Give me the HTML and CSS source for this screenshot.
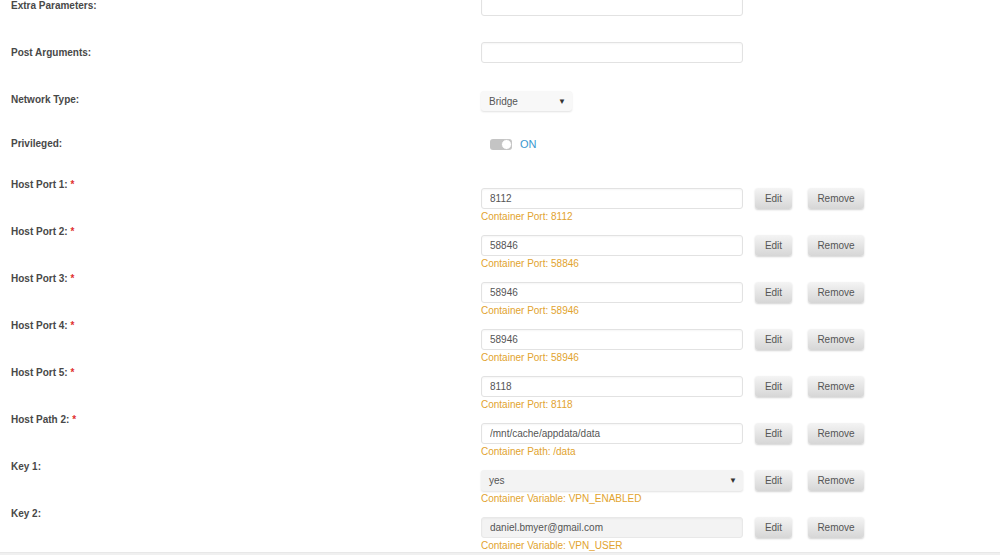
FILE: index.html
```html
<!DOCTYPE html>
<html lang="en">

<head>
    <meta charset="UTF-8">
    <meta name="viewport" content="width=device-width, initial-scale=1.0">
    <title>Update Container</title>
    <link rel="stylesheet" href="styles.css">
</head>

<body>
    <div class="form">
        <div class="row top">
            <div class="label">Extra Parameters:</div>
            <div class="value"><input type="text" class="text"></div>
        </div>
        <div class="row top">
            <div class="label">Post Arguments:</div>
            <div class="value"><input type="text" class="text"></div>
        </div>
        <div class="row top net">
            <div class="label">Network Type:</div>
            <div class="value">
                <div class="select small">Bridge<span class="arrow">&#9660;</span></div>
            </div>
        </div>
        <div class="row top priv">
            <div class="label">Privileged:</div>
            <div class="value switch-line">
                <span class="switch"><span class="knob"></span></span>
                <span class="on">ON</span>
            </div>
        </div>

        <!-- ports, paths, variables -->
        <div class="row item">
            <div class="label">Host Port 1: <span class="req">*</span></div>
            <div class="value">
                <div class="line">
                    <input type="text" class="text" value="8112">
                    <button class="btn edit">Edit</button>
                    <button class="btn remove">Remove</button>
                </div>
                <div class="desc">Container Port: 8112</div>
            </div>
        </div>
        <div class="row item">
            <div class="label">Host Port 2: <span class="req">*</span></div>
            <div class="value">
                <div class="line">
                    <input type="text" class="text" value="58846">
                    <button class="btn edit">Edit</button>
                    <button class="btn remove">Remove</button>
                </div>
                <div class="desc">Container Port: 58846</div>
            </div>
        </div>
        <div class="row item">
            <div class="label">Host Port 3: <span class="req">*</span></div>
            <div class="value">
                <div class="line">
                    <input type="text" class="text" value="58946">
                    <button class="btn edit">Edit</button>
                    <button class="btn remove">Remove</button>
                </div>
                <div class="desc">Container Port: 58946</div>
            </div>
        </div>
        <div class="row item">
            <div class="label">Host Port 4: <span class="req">*</span></div>
            <div class="value">
                <div class="line">
                    <input type="text" class="text" value="58946">
                    <button class="btn edit">Edit</button>
                    <button class="btn remove">Remove</button>
                </div>
                <div class="desc">Container Port: 58946</div>
            </div>
        </div>
        <div class="row item">
            <div class="label">Host Port 5: <span class="req">*</span></div>
            <div class="value">
                <div class="line">
                    <input type="text" class="text" value="8118">
                    <button class="btn edit">Edit</button>
                    <button class="btn remove">Remove</button>
                </div>
                <div class="desc">Container Port: 8118</div>
            </div>
        </div>
        <div class="row item">
            <div class="label">Host Path 2: <span class="req">*</span></div>
            <div class="value">
                <div class="line">
                    <input type="text" class="text" value="/mnt/cache/appdata/data">
                    <button class="btn edit">Edit</button>
                    <button class="btn remove">Remove</button>
                </div>
                <div class="desc">Container Path: /data</div>
            </div>
        </div>
        <div class="row item">
            <div class="label">Key 1:</div>
            <div class="value">
                <div class="line">
                    <div class="select wide">yes<span class="arrow">&#9660;</span></div>
                    <button class="btn edit">Edit</button>
                    <button class="btn remove">Remove</button>
                </div>
                <div class="desc">Container Variable: VPN_ENABLED</div>
            </div>
        </div>
        <div class="row item last">
            <div class="label">Key 2:</div>
            <div class="value">
                <div class="line">
                    <input type="text" class="text grey" value="daniel.bmyer@gmail.com">
                    <button class="btn edit">Edit</button>
                    <button class="btn remove">Remove</button>
                </div>
                <div class="desc">Container Variable: VPN_USER</div>
            </div>
        </div>
    </div>
    <div class="footer"></div>
</body>

</html>
```

FILE: styles.css
```css
html, body {
    margin: 0;
    height: 555px;
    overflow: hidden;
    background-color: #ffffff;
    font-family: "Liberation Sans", Arial, sans-serif;
}

.form {
    margin-top: -18px;
}

.row {
    display: flex;
    align-items: flex-start;
    height: 47px;
    padding-left: 11px;
}

.label {
    width: 470px;
    flex: none;
    font-size: 10px;
    line-height: 12px;
    font-weight: bold;
    color: #484848;
}

.req {
    color: #e03030;
}

/* simple rows */
.top .label {
    margin-top: 18px;
}

.top .value {
    margin-top: 13px;
}

.net .value {
    margin-top: 15px;
}

.priv {
    height: 55px;
}

.priv .label {
    margin-top: 15px;
}

.priv .value {
    margin-top: 15px;
}

/* rows with a description */
.item .label {
    margin-top: 1px;
}

.item .value {
    margin-top: 10px;
}

.last {
    height: 45px;
}

.line {
    display: flex;
    align-items: center;
}

.text {
    box-sizing: border-box;
    width: 262px;
    height: 21px;
    margin: 0;
    padding: 0 8px;
    border: 1px solid #e2e2e2;
    border-radius: 3px;
    box-shadow: inset 0 1px 2px rgba(0, 0, 0, 0.04);
    background-color: #ffffff;
    font-family: "Liberation Sans", Arial, sans-serif;
    font-size: 10px;
    color: #555555;
}

.text:focus {
    outline: none;
}

.text.grey {
    background-color: #f3f3f3;
    border-color: #e8e8e8;
}

.select {
    box-sizing: border-box;
    display: flex;
    align-items: center;
    justify-content: space-between;
    height: 21px;
    padding: 0 6px 0 8px;
    border-radius: 3px;
    background-color: #f6f6f6;
    box-shadow: 0 1px 2px rgba(0, 0, 0, 0.12);
    font-size: 10px;
    color: #555555;
}

.select.small {
    width: 91px;
    height: 20px;
    background-color: #f8f8f8;
}

.select.wide {
    width: 262px;
    background-color: #f3f3f3;
}

.arrow {
    font-size: 8px;
    color: #333333;
}

.btn {
    box-sizing: border-box;
    height: 21px;
    margin: 0;
    padding: 0;
    border: none;
    border-radius: 3px;
    background: linear-gradient(#f4f4f4, #d6d6d6);
    box-shadow: 0 1px 2px rgba(0, 0, 0, 0.18);
    font-family: "Liberation Sans", Arial, sans-serif;
    font-size: 10px;
    color: #555555;
    cursor: pointer;
}

.edit {
    width: 37px;
    margin-left: 12px;
}

.remove {
    width: 56px;
    margin-left: 16px;
}

.desc {
    margin-top: 2px;
    font-size: 10px;
    line-height: 12px;
    color: #e2a32e;
}

.switch-line {
    display: flex;
    align-items: center;
    padding-left: 9px;
}

.switch {
    position: relative;
    box-sizing: border-box;
    width: 22px;
    height: 11px;
    border-radius: 3px;
    background-color: #c4c4c4;
}

.knob {
    position: absolute;
    right: 0;
    top: 0;
    box-sizing: border-box;
    width: 11px;
    height: 11px;
    border-radius: 50%;
    border: 1px solid #c4c4c4;
    background-color: #ffffff;
}

.on {
    margin-left: 8px;
    font-size: 11px;
    color: #3a98cf;
}

.footer {
    height: 10px;
    background-color: #f0f0f0;
    border-top: 1px solid #e8e8e8;
}
```
